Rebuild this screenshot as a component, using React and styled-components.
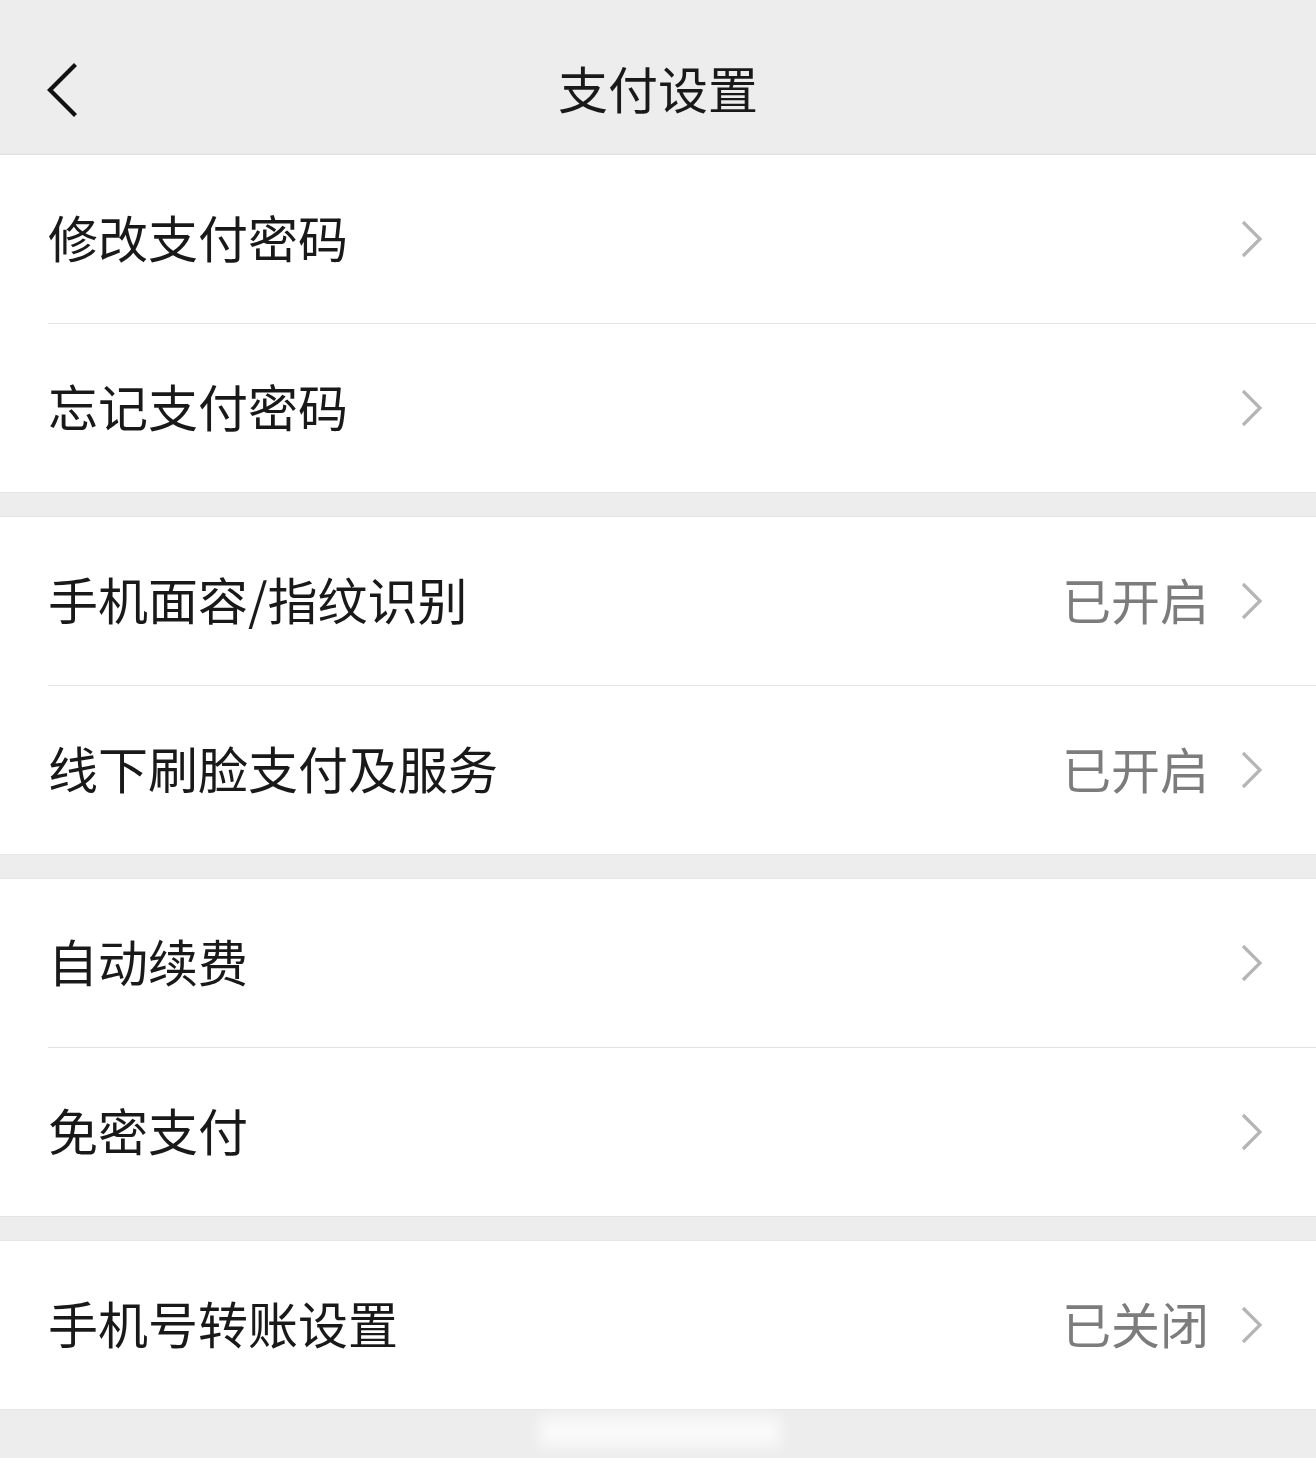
import React from 'react';
import styled, { createGlobalStyle } from 'styled-components';

const GlobalStyle = createGlobalStyle`
  html, body {
    margin: 0;
    padding: 0;
    background: #ededed;
  }
  body {
    font-family: 'Noto Sans CJK SC', 'Noto Sans', sans-serif;
  }
`;

const groups = [
  [
    { label: '修改支付密码' },
    { label: '忘记支付密码' },
  ],
  [
    { label: '手机面容/指纹识别', value: '已开启' },
    { label: '线下刷脸支付及服务', value: '已开启' },
  ],
  [
    { label: '自动续费' },
    { label: '免密支付' },
  ],
  [
    { label: '手机号转账设置', value: '已关闭' },
  ],
];

const BackIcon = () => (
  <svg width="34" height="54" viewBox="0 0 34 54" fill="none">
    <path d="M29 3 L5 27 L29 51" stroke="#111" strokeWidth="4.2" strokeLinecap="square" strokeLinejoin="miter" />
  </svg>
);

const Chevron = () => (
  <svg width="24" height="40" viewBox="0 0 24 40" fill="none">
    <path d="M3 3 L20 20 L3 37" stroke="#b5b5b5" strokeWidth="3.2" strokeLinecap="butt" />
  </svg>
);

const App = () => {
  return (
    <>
      <GlobalStyle />
      <Page>
        <Header>
          <BackButton>
            <BackIcon />
          </BackButton>
          <Title>支付设置</Title>
        </Header>
        <Groups>
          {groups.map((items, gi) => (
            <Group key={gi}>
              {items.map((item) => (
                <Row key={item.label}>
                  <RowInner>
                    <Label>{item.label}</Label>
                    <Right>
                      {item.value && <Value>{item.value}</Value>}
                      <Chevron />
                    </Right>
                  </RowInner>
                </Row>
              ))}
            </Group>
          ))}
        </Groups>
        <Footer>
          <Watermark />
        </Footer>
      </Page>
    </>
  );
};

export default App;

const Page = styled.div`
  width: 1316px;
  min-height: 1458px;
  background: #ededed;
  display: flex;
  flex-direction: column;
`;

const Header = styled.div`
  height: 155px;
  position: relative;
  display: flex;
  align-items: center;
  justify-content: center;
  border-bottom: 1px solid #e4e4e4;
  box-sizing: border-box;
`;

const BackButton = styled.div`
  position: absolute;
  left: 45px;
  top: 63px;
  display: flex;
`;

const Title = styled.h1`
  margin: 0;
  font-size: 50px;
  font-weight: 400;
  color: #191919;
  line-height: 1;
  padding-top: 20px;
`;

const Groups = styled.div`
  display: flex;
  flex-direction: column;
  gap: 25px;
  margin-top: -1px;

  & > div:first-child {
    padding-top: 1px;
  }
`;

const Group = styled.div`
  background: #fff;
  display: flex;
  flex-direction: column;
  box-shadow: 0 1px 0 #e6e6e6, 0 -1px 0 #e6e6e6;
`;

const Row = styled.div`
  padding-left: 48px;
  display: flex;
  & + & > div {
    border-top: 1px solid #e3e3e3;
  }
`;

const RowInner = styled.div`
  flex: 1;
  height: 168px;
  display: flex;
  align-items: center;
  justify-content: space-between;
  padding-right: 52px;
`;

const Label = styled.span`
  font-size: 50px;
  color: #191919;
  line-height: 1;
  padding-bottom: 6px;
`;

const Right = styled.div`
  display: flex;
  align-items: center;
  gap: 31px;
`;

const Value = styled.span`
  font-size: 49px;
  color: #7c7c7c;
  line-height: 1;
  padding-bottom: 6px;
`;

const Footer = styled.div`
  height: 50px;
  position: relative;
`;

const Watermark = styled.div`
  position: absolute;
  left: 540px;
  top: 8px;
  width: 240px;
  height: 30px;
  background: rgba(255, 255, 255, 0.7);
  filter: blur(7px);
`;
